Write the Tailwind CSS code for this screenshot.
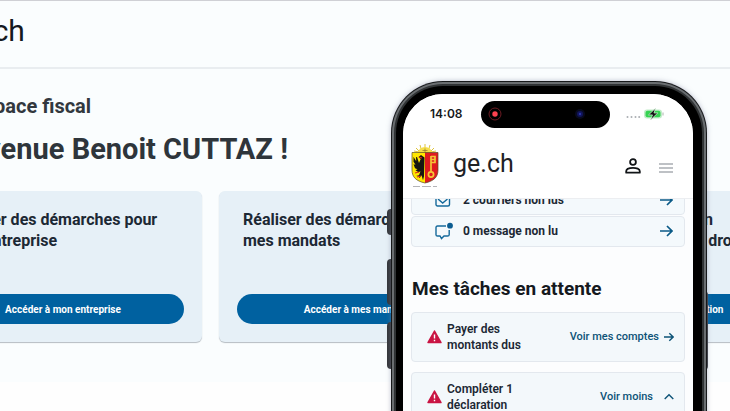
<!DOCTYPE html>
<html lang="fr">
<head>
    <meta charset="UTF-8">
    <meta name="viewport" content="width=device-width, initial-scale=1.0">
    <title>ge.ch - Mon espace fiscal</title>
    <script src="https://cdn.jsdelivr.net/npm/@tailwindcss/browser@4"></script>
</head>
<body class="relative h-screen overflow-hidden bg-[#fefefe] font-[Roboto,sans-serif] text-[#1c2834]">

    <!-- Desktop page -->
    <div class="border-t border-[#cfd0d5] bg-[#fafdfe]">
        <header class="flex h-[68px] items-center border-b-2 border-[#e9edf0] pb-2">
            <a href="#" class="-ml-12 text-[30px] text-[#15191e]">ge.ch</a>
        </header>
        <main class="-mr-[62px] -ml-[76px] pt-[23px] pb-10">
            <p class="pl-1 text-[20px] leading-7 font-bold text-[#32383e]">Mon espace fiscal</p>
            <h1 class="mt-[11px] pl-1 text-[29px] leading-9 font-bold text-[#2e353b]">Bienvenue Benoit CUTTAZ !</h1>
            <div class="mt-6 grid grid-cols-3 gap-[17px]">
                <section class="flex h-[151px] flex-col justify-between rounded-md bg-[#e6f0f7] p-[18px] shadow-[0_1px_1px_#b5bcc2]">
                    <h2 class="px-[6px] text-[16px] leading-[21px] font-bold">Réaliser des démarches pour<br>mon entreprise</h2>
                    <button class="h-[30px] rounded-full bg-[#0061a0] text-[10px] font-bold text-white">Accéder à mon entreprise</button>
                </section>
                <section class="flex h-[151px] flex-col justify-between rounded-md bg-[#e6f0f7] p-[18px] shadow-[0_1px_1px_#b5bcc2]">
                    <h2 class="px-[6px] text-[16px] leading-[21px] font-bold">Réaliser des démarches pour<br>mes mandats</h2>
                    <button class="h-[30px] rounded-full bg-[#0061a0] text-[10px] font-bold text-white">Accéder à mes mandats</button>
                </section>
                <section class="flex h-[151px] flex-col justify-between rounded-md bg-[#e6f0f7] p-[18px] shadow-[0_1px_1px_#b5bcc2]">
                    <h2 class="px-[6px] text-[16px] leading-[21px] font-bold">Déposer une déclaration<br>et faire valoir aussi vos droits</h2>
                    <button class="h-[30px] rounded-full bg-[#0061a0] text-[10px] font-bold text-white">Commencer ma télédéclaration</button>
                </section>
            </div>
        </main>
    </div>

    <!-- Phone, laid over the page -->
    <div class="absolute top-[81px] left-[391px] h-[660px] w-[316px]">
        <span class="absolute top-[128px] -left-1 h-[26px] w-2 rounded-sm bg-[#34363a]"></span>
        <span class="absolute top-[178px] -left-1 h-[46px] w-2 rounded-sm bg-[#34363a]"></span>
        <span class="absolute top-[241px] -left-1 h-[47px] w-2 rounded-sm bg-[#34363a]"></span>
        <span class="absolute top-[210px] -right-px h-[79px] w-2 rounded-sm bg-[#34363a]"></span>

        <div class="relative h-full rounded-[52px] bg-[#17191b] p-px shadow-[0_0_5px_#7d7f9d80]">
            <div class="h-full rounded-[51px] bg-[#6a6e71] p-[2px]">
                <div class="h-full rounded-[49px] bg-[#303335] p-[2px]">
                    <div class="h-full rounded-[47px] bg-black pt-[8px] pr-[9px] pl-[7px]">
                        <div class="h-full overflow-hidden rounded-[40px] bg-[#fcfdfe]">

                            <div class="flex h-10 items-center bg-white pr-[29px] pl-[27px]">
                                <span class="w-[51px] font-[Inter,sans-serif] text-[12px] font-semibold text-[#16181b]">14:08</span>
                                <div class="flex h-[27px] w-[129px] items-center justify-between rounded-full bg-black px-[6px]">
                                    <svg class="size-4" viewBox="0 0 16 16" fill="none">
                                        <circle cx="8" cy="8" r="6" stroke="#6d1b23"/>
                                        <circle cx="8" cy="8" r="2.7" fill="#ff4250"/>
                                    </svg>
                                    <svg class="mr-4 size-4" viewBox="0 0 16 16">
                                        <circle cx="8" cy="8" r="5" fill="#080a1d"/>
                                        <circle cx="8" cy="8" r="3" fill="#10145a"/>
                                        <circle cx="8" cy="8" r="1.2" fill="#2b35a3"/>
                                    </svg>
                                </div>
                                <svg class="ml-auto h-3 w-[38px]" viewBox="0 0 38 12">
                                    <g fill="#aaaeb2">
                                        <circle cx="1.5" cy="9" r="1"/>
                                        <circle cx="5.5" cy="9" r="1"/>
                                        <circle cx="9.5" cy="9" r="1"/>
                                        <circle cx="13.2" cy="9" r="1"/>
                                    </g>
                                    <rect x="18" y="1.5" width="18" height="9" rx="3" fill="#c1ecc8"/>
                                    <rect x="19.5" y="2.8" width="15" height="6.4" rx="2" fill="#36d352"/>
                                    <path d="M37 4.5v3" stroke="#abb4ad"/>
                                    <path d="M29.500 .3 22.500 6.900H26.500L24.500 11.900 31.800 5H28Z" fill="#111" stroke="#d8f7dd" stroke-width=".7"/>
                                </svg>
                            </div>

                            <header class="flex h-[65px] items-center border-b border-[#eceef1] bg-white pr-5 pl-2">
                                <svg class="h-[46px] w-[28px]" viewBox="0 0 28 46">
                                    <g stroke="#dec33c" stroke-width="1">
                                        <path d="M14 10V1M11 9 9 2M17 9l2-7M9 9 5 5M19 9l4-4M8 9 3 8M20 9l5-1"/>
                                    </g>
                                    <path d="M7 10a7 6 0 0 1 14 0Z" fill="#f5dd47"/>
                                    <path d="M11.500 7.500h5M14 5.500v4" stroke="#8e762a" stroke-width=".7"/>
                                    <path d="M1 9.500h13V40C5 38 1 34 1 27Z" fill="#ffe600"/>
                                    <path d="M14 9.500h13V27c0 7-4 11-13 13Z" fill="#df1b20"/>
                                    <path d="M13.500 14.500 10 12 7.500 14l2.200 2-1.700 4-2-6-1 .2.200 4-2.700-4.500v5l2 3-2-.5 1.500 4 2.500 1-2 1 3 2 2-1-1.500 4-3 .8 3 .2.500 2 2-3 1.500 5 1-4Z" fill="#171611"/>
                                    <path d="m4 30 4-1M6 34l4-1M8 14l3 1" stroke="#d72720" stroke-width="1.200"/>
                                    <g fill="none" stroke="#f5c636" stroke-width="1.700">
                                        <path d="M20 13v16"/>
                                        <path d="M20 13.500h4v6h-4M20 16.500h4"/>
                                        <circle cx="20" cy="31.500" r="2.600"/>
                                    </g>
                                    <path d="M1 9.500h26V27c0 7-4 11-13 13C5 38 1 34 1 27Z" fill="none" stroke="#5a4a24" stroke-width=".7"/>
                                    <path d="M2 43.500h7M11 43.500h9M22 43.500h4" stroke="#b4b4b8" stroke-width="1"/>
                                </svg>
                                <a href="#" class="ml-[14px] pb-1 text-[25px] leading-8 text-[#1f2225]">ge.ch</a>
                                <button class="ml-auto pb-px" aria-label="Mon compte">
                                    <svg class="h-4 w-4" viewBox="0 0 16 16" fill="none" stroke="#111417" stroke-width="1.800">
                                        <circle cx="8" cy="4" r="2.900"/>
                                        <path d="M1.200 14.700v-1.500C1.200 11 4.500 9.800 8 9.800s6.800 1.200 6.800 3.400v1.500Z" stroke-linejoin="round"/>
                                    </svg>
                                </button>
                                <button class="ml-[18px]" aria-label="Menu">
                                    <svg class="mt-1 h-3 w-[14px]" viewBox="0 0 14 12" stroke="#a9adb2" stroke-width="1.500">
                                        <path d="M0 2h14M0 6h14M0 10h14"/>
                                    </svg>
                                </button>
                            </header>

                            <div class="overflow-hidden px-2">
                                <a href="#" class="-mt-[15px] flex h-[31px] items-center rounded-sm border border-[#e3e8ee] bg-[#f4f9fc] pr-[11px] pl-[23px]">
                                    <svg class="h-4 w-[18px]" viewBox="0 0 18 16" fill="none" stroke="#14699b" stroke-width="1.400">
                                        <rect x="1" y="2" width="13.500" height="12" rx="1.500"/>
                                        <path d="m3 7 4.700 4L12.500 7"/>
                                    </svg>
                                    <span class="ml-[10px] text-[12px] font-bold">2 courriers non lus</span>
                                    <svg class="ml-auto h-3 w-[13px]" viewBox="0 0 13 12" fill="none" stroke="#0a5a87" stroke-width="1.700">
                                        <path d="M0 6h11.500M7 1l5 5-5 5"/>
                                    </svg>
                                </a>
                                <a href="#" class="mt-px flex h-[31px] items-center rounded-sm border border-[#e3e8ee] bg-[#f4f9fc] pr-[11px] pb-[2px] pl-[23px]">
                                    <svg class="h-[18px] w-[18px]" viewBox="0 0 18 18" fill="none" stroke="#14699b" stroke-width="1.400">
                                        <path d="M11 4H2.500Q1 4 1 5.500v7.200q0 1.300 1.500 1.300H5l1.500 2.500L9 14h3.500q1.700 0 1.700-1.300V8"/>
                                        <circle cx="15" cy="3.700" r="2.900" fill="#0c5d91" stroke="none"/>
                                    </svg>
                                    <span class="ml-[10px] text-[12px] font-bold">0 message non lu</span>
                                    <svg class="ml-auto h-3 w-[13px]" viewBox="0 0 13 12" fill="none" stroke="#0a5a87" stroke-width="1.700">
                                        <path d="M0 6h11.500M7 1l5 5-5 5"/>
                                    </svg>
                                </a>
                            </div>

                            <section class="px-2 pt-[30px]">
                                <h2 class="pl-px text-[19px] leading-6 font-bold text-[#15191e]">Mes tâches en attente</h2>
                                <div class="mt-[11px] flex h-[50px] items-center rounded-sm border border-[#e3e8ee] bg-[#f3f8fb] pr-[10px] pl-[15px]">
                                    <svg class="h-[14px] w-[15px]" viewBox="0 0 15 14">
                                        <path d="M7.500 1 14 12.500H1Z" fill="#c91443" stroke="#c91443" stroke-width="1.500" stroke-linejoin="round"/>
                                        <path d="M7.500 4.500v4M7.500 9.700v1.600" stroke="#fff" stroke-width="1.400"/>
                                    </svg>
                                    <p class="ml-[5px] text-[12px] leading-4 font-semibold">Payer des<br>montants dus</p>
                                    <a href="#" class="ml-auto flex items-center gap-[5px] text-[11px] font-medium text-[#0d5377]">Voir mes comptes
                                        <svg class="h-[10px] w-[10px]" viewBox="0 0 10 10" fill="none" stroke="currentColor" stroke-width="1.400">
                                            <path d="M0 5h9M5.300 1.200 9.200 5 5.300 8.800"/>
                                        </svg>
                                    </a>
                                </div>
                                <div class="mt-[10px] flex h-[50px] items-center rounded-sm border border-[#e3e8ee] bg-[#f3f8fb] pr-[10px] pl-[15px]">
                                    <svg class="h-[14px] w-[15px]" viewBox="0 0 15 14">
                                        <path d="M7.500 1 14 12.500H1Z" fill="#c91443" stroke="#c91443" stroke-width="1.500" stroke-linejoin="round"/>
                                        <path d="M7.500 4.500v4M7.500 9.700v1.600" stroke="#fff" stroke-width="1.400"/>
                                    </svg>
                                    <p class="ml-[5px] text-[12px] leading-4 font-semibold">Compléter 1<br>déclaration</p>
                                    <button class="ml-auto flex items-center gap-[11px] text-[11px] font-medium text-[#0d5377]">Voir moins
                                        <svg class="h-[10px] w-[10px]" viewBox="0 0 10 10" fill="none" stroke="currentColor" stroke-width="1.400">
                                            <path d="M.7 7 5 2.700 9.300 7"/>
                                        </svg>
                                    </button>
                                </div>
                            </section>

                        </div>
                    </div>
                </div>
            </div>
        </div>
    </div>

</body>
</html>
